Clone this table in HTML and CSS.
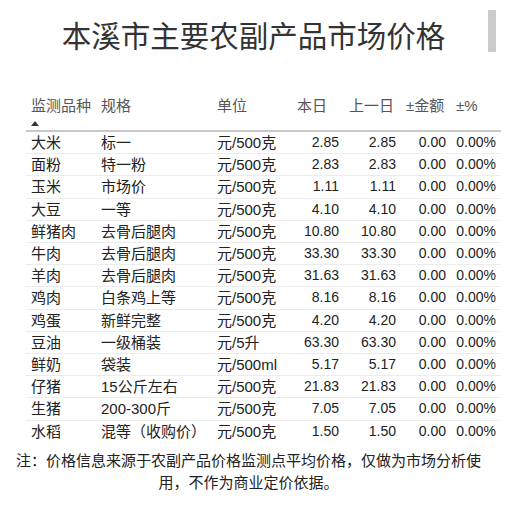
FILE: index.html
```html
<!DOCTYPE html>
<html lang="zh-CN">
<head>
<meta charset="utf-8">
<title>本溪市主要农副产品市场价格</title>
<link rel="stylesheet" href="styles.css">
</head>
<body>
<div class="page">
  <h1 class="title">本溪市主要农副产品市场价格</h1>
  <div class="scroll-thumb"></div>
  <table class="prices">
    <colgroup>
      <col class="c1"><col class="c2"><col class="c3"><col class="c4"><col class="c5"><col class="c6"><col class="c7">
    </colgroup>
    <thead>
      <tr>
        <th><span>监测品种</span><span class="sort"></span></th>
        <th>规格</th>
        <th>单位</th>
        <th>本日</th>
        <th>上一日</th>
        <th>±金额</th>
        <th>±%</th>
      </tr>
    </thead>
    <tbody>
      <tr><td>大米</td><td>标一</td><td>元/500克</td><td class="n">2.85</td><td class="n">2.85</td><td class="n">0.00</td><td class="n">0.00%</td></tr>
      <tr><td>面粉</td><td>特一粉</td><td>元/500克</td><td class="n">2.83</td><td class="n">2.83</td><td class="n">0.00</td><td class="n">0.00%</td></tr>
      <tr><td>玉米</td><td>市场价</td><td>元/500克</td><td class="n">1.11</td><td class="n">1.11</td><td class="n">0.00</td><td class="n">0.00%</td></tr>
      <tr><td>大豆</td><td>一等</td><td>元/500克</td><td class="n">4.10</td><td class="n">4.10</td><td class="n">0.00</td><td class="n">0.00%</td></tr>
      <tr><td>鲜猪肉</td><td>去骨后腿肉</td><td>元/500克</td><td class="n">10.80</td><td class="n">10.80</td><td class="n">0.00</td><td class="n">0.00%</td></tr>
      <tr><td>牛肉</td><td>去骨后腿肉</td><td>元/500克</td><td class="n">33.30</td><td class="n">33.30</td><td class="n">0.00</td><td class="n">0.00%</td></tr>
      <tr><td>羊肉</td><td>去骨后腿肉</td><td>元/500克</td><td class="n">31.63</td><td class="n">31.63</td><td class="n">0.00</td><td class="n">0.00%</td></tr>
      <tr><td>鸡肉</td><td>白条鸡上等</td><td>元/500克</td><td class="n">8.16</td><td class="n">8.16</td><td class="n">0.00</td><td class="n">0.00%</td></tr>
      <tr><td>鸡蛋</td><td>新鲜完整</td><td>元/500克</td><td class="n">4.20</td><td class="n">4.20</td><td class="n">0.00</td><td class="n">0.00%</td></tr>
      <tr><td>豆油</td><td>一级桶装</td><td>元/5升</td><td class="n">63.30</td><td class="n">63.30</td><td class="n">0.00</td><td class="n">0.00%</td></tr>
      <tr><td>鲜奶</td><td>袋装</td><td>元/500ml</td><td class="n">5.17</td><td class="n">5.17</td><td class="n">0.00</td><td class="n">0.00%</td></tr>
      <tr><td>仔猪</td><td>15公斤左右</td><td>元/500克</td><td class="n">21.83</td><td class="n">21.83</td><td class="n">0.00</td><td class="n">0.00%</td></tr>
      <tr><td>生猪</td><td>200-300斤</td><td>元/500克</td><td class="n">7.05</td><td class="n">7.05</td><td class="n">0.00</td><td class="n">0.00%</td></tr>
      <tr><td>水稻</td><td>混等（收购价）</td><td>元/500克</td><td class="n">1.50</td><td class="n">1.50</td><td class="n">0.00</td><td class="n">0.00%</td></tr>
    </tbody>
  </table>
  <p class="note">注：价格信息来源于农副产品价格监测点平均价格，仅做为市场分析使用，不作为商业定价依据。</p>
</div>
</body>
</html>
```
FILE: styles.css
```css
html, body {
  margin: 0;
  padding: 0;
  background: #fff;
}
body {
  font-family: "Liberation Sans", "Noto Sans CJK SC", sans-serif;
  color: #222;
}
.page {
  position: relative;
  width: 497px;
  padding-top: 14px;
}
.title {
  margin: 0 0 0 10px;
  font-family: "Noto Sans CJK SC", sans-serif;
  font-weight: normal;
  font-size: 29.5px;
  line-height: 40px;
  color: #333;
  text-align: center;
}
.scroll-thumb {
  position: absolute;
  left: 488px;
  top: 10px;
  width: 8px;
  height: 42px;
  background: #cbcbcb;
}
.prices {
  margin: 41px 0 0 26px;
  width: 475px;
  border-collapse: collapse;
  table-layout: fixed;
  font-size: 15px;
}
.c1 { width: 70px; }
.c2 { width: 116px; }
.c3 { width: 80px; }
.c4 { width: 52px; }
.c5 { width: 57px; }
.c6 { width: 50px; }
.c7 { width: 50px; }
.prices th {
  font-weight: normal;
  color: #555;
  text-align: left;
  vertical-align: top;
  padding: 0 5px 0;
  height: 35px;
  line-height: 22px;
  border-bottom: 2px solid #c8c8c8;
  white-space: nowrap;
}
.sort {
  display: block;
  width: 0;
  height: 0;
  margin-top: 4px;
  border-left: 4.5px solid transparent;
  border-right: 4.5px solid transparent;
  border-bottom: 5px solid #333;
}
.prices td {
  padding: 0 5px;
  height: 21.2px;
  line-height: 21.2px;
  border-bottom: 1px solid #ececec;
  white-space: nowrap;
}
.prices tbody tr:last-child td {
  border-bottom: none;
}
.prices td.n {
  text-align: right;
  font-size: 14px;
}
.note {
  margin: 8px 0 0;
  padding: 0 10px;
  font-size: 15px;
  line-height: 22px;
  text-align: center;
  color: #222;
}
```
